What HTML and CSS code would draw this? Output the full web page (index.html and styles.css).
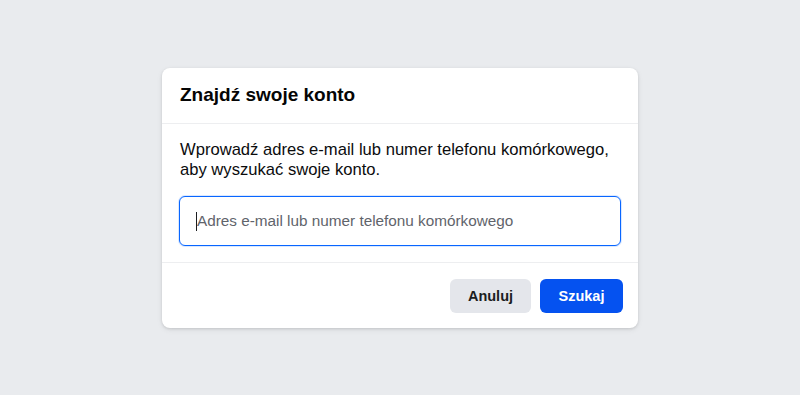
FILE: index.html
```html
<!DOCTYPE html>
<html lang="pl">
<head>
<meta charset="utf-8">
<title>Znajdź swoje konto</title>
<link rel="stylesheet" href="styles.css">
</head>
<body>
<div class="page">
  <div class="card">
    <div class="card-header">
      <h2 class="title">Znajdź swoje konto</h2>
    </div>
    <div class="card-body">
      <p class="desc">Wprowadź adres e-mail lub numer telefonu komórkowego, aby wyszukać swoje konto.</p>
      <div class="field">
        <input class="input" type="text" placeholder="Adres e-mail lub numer telefonu komórkowego">
      </div>
    </div>
    <div class="card-footer">
      <button class="btn btn-secondary" type="button">Anuluj</button>
      <button class="btn btn-primary" type="button">Szukaj</button>
    </div>
  </div>
</div>
</body>
</html>
```
FILE: styles.css
```css
* { box-sizing: border-box; }
html, body {
  margin: 0;
  padding: 0;
  height: 100%;
  background: #e9ebee;
  font-family: "Liberation Sans", Arial, sans-serif;
  color: #1c1e21;
}
.page {
  height: 100%;
  display: flex;
  align-items: center;
  justify-content: center;
}
.card {
  width: 476px;
  background: #fff;
  border-radius: 8px;
  box-shadow: 0 1px 3px rgba(0,0,0,0.12), 0 2px 6px rgba(0,0,0,0.06);
}
.card-header {
  height: 56px;
  display: flex;
  align-items: center;
  padding: 0 18px;
  border-bottom: 1px solid #edeef0;
}
.title {
  margin: 0;
  font-size: 19px;
  font-weight: bold;
  color: #050505;
}
.card-body {
  padding: 16px 17px 16px 17px;
  border-bottom: 1px solid #edeef0;
}
.desc {
  margin: 0 0 16px 1px;
  font-size: 16.6px;
  line-height: 20px;
  color: #0b0c0e;
}
.field {
  position: relative;
}
.field::before {
  content: "";
  position: absolute;
  left: 17px;
  top: 16px;
  width: 1px;
  height: 19px;
  background: #1c1e21;
}
.input {
  display: block;
  width: 100%;
  height: 50px;
  border: 1.5px solid #0866ff;
  border-radius: 6px;
  padding: 0 16px 0 17px;
  font-family: "Liberation Sans", Arial, sans-serif;
  font-size: 15.3px;
  color: #1c1e21;
  outline: none;
  box-shadow: 0 0 0 1px rgba(8,102,255,0.15);
}
.input::placeholder {
  color: #5f646b;
}
.card-footer {
  display: flex;
  justify-content: flex-end;
  gap: 9px;
  padding: 16px 15px 15px 16px;
}
.btn {
  height: 34px;
  border: none;
  border-radius: 6px;
  padding: 0 10px;
  font-family: "Liberation Sans", Arial, sans-serif;
  font-size: 14.5px;
  font-weight: bold;
  cursor: pointer;
}
.btn-secondary {
  width: 81px;
  background: #e4e6eb;
  color: #1c1e21;
}
.btn-primary {
  width: 83px;
  background: #0552f0;
  color: #fff;
}
```
